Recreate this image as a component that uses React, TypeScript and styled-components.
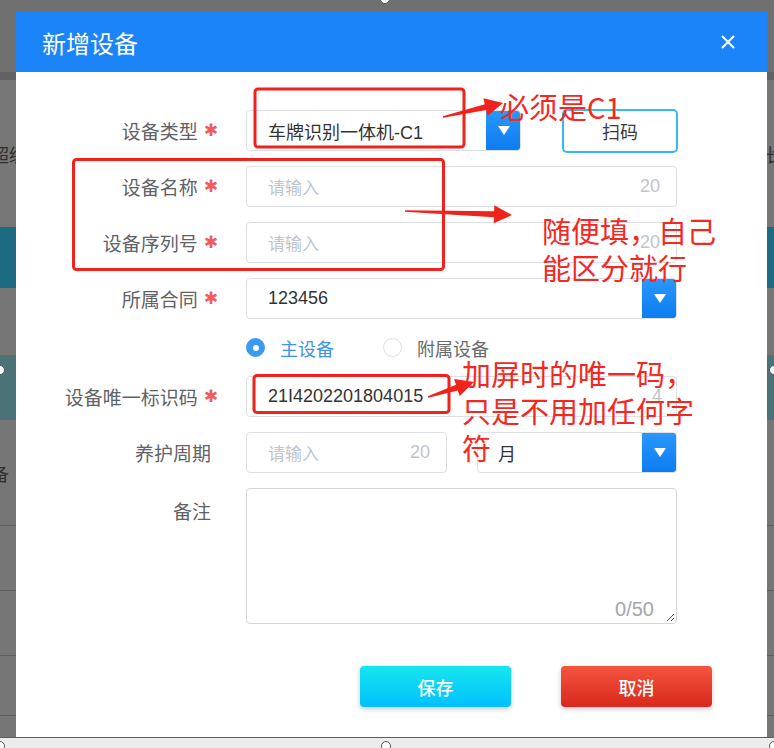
import React from "react";
import styled, { createGlobalStyle } from "styled-components";

const GlobalStyle = createGlobalStyle`
  html, body {
    margin: 0;
    padding: 0;
  }
  body {
    font-family: "Liberation Sans", "Noto Sans CJK SC", sans-serif;
  }
  * {
    box-sizing: border-box;
  }
`;

const RED = "#f0221b";

function arrowPoints(x1: number, y1: number, x2: number, y2: number) {
  const dx = x2 - x1;
  const dy = y2 - y1;
  const len = Math.sqrt(dx * dx + dy * dy);
  const ux = dx / len;
  const uy = dy / len;
  const nx = -uy;
  const ny = ux;
  const head = 18;
  const wing = 9;
  const neck = 3;
  const bx = x2 - ux * head;
  const by = y2 - uy * head;
  const pts = [
    [x1 + nx * 0.8, y1 + ny * 0.8],
    [bx + nx * neck, by + ny * neck],
    [bx + nx * wing, by + ny * wing],
    [x2, y2],
    [bx - nx * wing, by - ny * wing],
    [bx - nx * neck, by - ny * neck],
    [x1 - nx * 0.8, y1 - ny * 0.8],
  ];
  return pts.map((p) => p.map((v) => v.toFixed(1)).join(",")).join(" ");
}

const BG_ROWS = [
  { h: 72, tone: "#707070" },
  { h: 8, tone: "#626262" },
  { h: 147, tone: "#777777", left: "超级", right: "长" },
  { h: 61, tone: "#1c6b83" },
  { h: 67, tone: "#767676" },
  { h: 65, tone: "#4b7277" },
  { h: 105, tone: "#767676", left: "备" },
  { h: 65, tone: "#767676", line: true },
  { h: 65, tone: "#767676", line: true },
  { h: 60, tone: "#767676", line: true },
  { h: 22, tone: "#767676", line: true },
  { h: 11, tone: "#ececec", line: true },
];

export default function App() {
  return (
    <>
      <GlobalStyle />
      <Screen>
        <BackPage>
          {BG_ROWS.map((r, i) => (
            <BgRow key={i} $h={r.h} $tone={r.tone} $line={r.line}>
              <EdgeText $side="left">{r.left}</EdgeText>
              <EdgeText $side="right">{r.right}</EdgeText>
            </BgRow>
          ))}
        </BackPage>

        <Dialog>
          <Header>
            <Title>新增设备</Title>
            <CloseIcon width="16" height="16" viewBox="0 0 16 16">
              <path d="M2 2L14 14M14 2L2 14" stroke="#fff" strokeWidth="2" />
            </CloseIcon>
          </Header>

          <Form>
            <Label>
              设备类型<Star>✱</Star>
            </Label>
            <Inline $gap={41}>
              <Field $w={275}>
                <Value>车牌识别一体机-C1</Value>
                <DropBtn />
              </Field>
              <ScanButton>扫码</ScanButton>
            </Inline>

            <Label>
              设备名称<Star>✱</Star>
            </Label>
            <Field>
              <Placeholder>请输入</Placeholder>
              <Counter>20</Counter>
            </Field>

            <Label>
              设备序列号<Star>✱</Star>
            </Label>
            <Field>
              <Placeholder>请输入</Placeholder>
              <Counter>20</Counter>
            </Field>

            <Label>
              所属合同<Star>✱</Star>
            </Label>
            <Field>
              <Value>123456</Value>
              <DropBtn />
            </Field>

            <div />
            <RadioGroup>
              <RadioItem $checked>
                <RadioDot $checked />
                主设备
              </RadioItem>
              <RadioItem>
                <RadioDot />
                附属设备
              </RadioItem>
            </RadioGroup>

            <Label>
              设备唯一标识码<Star>✱</Star>
            </Label>
            <Field>
              <Value>21I4202201804015</Value>
              <Counter $pad={14}>4</Counter>
            </Field>

            <Label>养护周期</Label>
            <Inline $gap={30}>
              <Field $w={201}>
                <Placeholder>请输入</Placeholder>
                <Counter>20</Counter>
              </Field>
              <Field $w={200} $pad={20}>
                <Value>月</Value>
                <DropBtn />
              </Field>
            </Inline>

            <Label $top>备注</Label>
            <TextArea>
              <AreaCounter>0/50</AreaCounter>
              <Grip width="9" height="9" viewBox="0 0 9 9">
                <path d="M1 8L8 1M5 8L8 5" stroke="#555" strokeWidth="1" />
              </Grip>
            </TextArea>
          </Form>

          <Footer>
            <ActionButton $variant="save">保存</ActionButton>
            <ActionButton $variant="cancel">取消</ActionButton>
          </Footer>
        </Dialog>

        <Markup width="774" height="748" viewBox="0 0 774 748">
          <rect x="255" y="89" width="209" height="58" rx="3" fill="none" stroke={RED} strokeWidth="3" />
          <rect x="73.5" y="159.5" width="370" height="110" rx="3" fill="none" stroke={RED} strokeWidth="3" />
          <rect x="254" y="375.5" width="195" height="37" rx="3" fill="none" stroke={RED} strokeWidth="3" />
          <polygon points={arrowPoints(443, 117, 503, 103)} fill={RED} />
          <polygon points={arrowPoints(405, 211, 512, 215)} fill={RED} />
          <polygon points={arrowPoints(428, 397, 474, 382)} fill={RED} />
        </Markup>

        <Note $x={500} $y={88}>必须是C1</Note>
        <Note $x={542} $y={212}>
          随便填，自己
          <br />
          能区分就行
        </Note>
        <Note $x={462} $y={355}>
          加屏时的唯一码，
          <br />
          只是不用加任何字
          <br />符
        </Note>

        <Handle $x={385} $y={-1} />
        <Handle $x={0} $y={370} />
        <Handle $x={774} $y={370} />
        <Handle $x={0} $y={746} />
        <Handle $x={386} $y={746} />
        <Handle $x={774} $y={746} />
      </Screen>
    </>
  );
}

const Screen = styled.div`
  position: relative;
  width: 774px;
  height: 748px;
  overflow: hidden;
  background: #727272;
`;

const BackPage = styled.div`
  display: flex;
  flex-direction: column;
`;

const BgRow = styled.div<{ $h: number; $tone: string; $line?: boolean }>`
  height: ${(p) => p.$h}px;
  background: ${(p) => p.$tone};
  border-top: ${(p) => (p.$line ? "1px solid #5d5d5d" : "none")};
  display: flex;
  justify-content: space-between;
  align-items: center;
  font-size: 18px;
  color: #2e2e2e;
  font-family: "Noto Sans CJK SC", sans-serif;
`;

const EdgeText = styled.span<{ $side: "left" | "right" }>`
  margin-${(p) => p.$side}: -9px;
`;

const Dialog = styled.div`
  position: absolute;
  left: 16px;
  top: 12px;
  width: 751px;
  height: 725px;
  background: #fff;
  display: flex;
  flex-direction: column;
`;

const Header = styled.div`
  height: 60px;
  background: #1a84f8;
  display: flex;
  align-items: center;
  justify-content: space-between;
  padding: 0 31px 0 26px;
`;

const Title = styled.h2`
  margin: 0;
  font-size: 24px;
  font-weight: 400;
  color: #fff;
  font-family: "Noto Sans CJK SC", sans-serif;
`;

const CloseIcon = styled.svg`
  display: block;
`;

const Form = styled.div`
  display: grid;
  grid-template-columns: 214px 431px;
  column-gap: 16px;
  row-gap: 15px;
  padding-top: 38px;
`;

const Label = styled.div<{ $top?: boolean }>`
  display: flex;
  justify-content: flex-end;
  align-items: ${(p) => (p.$top ? "flex-start" : "center")};
  height: ${(p) => (p.$top ? "auto" : "41px")};
  padding-right: 19px;
  padding-top: ${(p) => (p.$top ? "2px" : "0")};
  font-size: 19px;
  line-height: 41px;
  color: #5f6266;
  font-family: "Noto Sans CJK SC", sans-serif;
`;

const Star = styled.span`
  color: #f25b5b;
  font-size: 17px;
  line-height: 1;
  margin-left: 6px;
  margin-right: -7px;
  font-family: "DejaVu Sans", sans-serif;
`;

const Inline = styled.div<{ $gap: number }>`
  display: flex;
  align-items: center;
  height: 41px;
  gap: ${(p) => p.$gap}px;
`;

const Field = styled.div<{ $w?: number; $pad?: number }>`
  height: 41px;
  flex-shrink: 0;
  width: ${(p) => (p.$w ? `${p.$w}px` : "100%")};
  border: 1px solid #dcdfe6;
  border-radius: 4px;
  display: flex;
  align-items: center;
  padding-left: ${(p) => p.$pad ?? 21}px;
  font-size: 18px;
  color: #333;
  overflow: hidden;
`;

const Value = styled.span`
  flex: 1;
  white-space: nowrap;
`;

const Placeholder = styled.span`
  flex: 1;
  color: #c0c4cc;
  font-family: "Noto Sans CJK SC", sans-serif;
  font-size: 17px;
`;

const Counter = styled.span<{ $pad?: number }>`
  color: #c0c4cc;
  padding-right: ${(p) => p.$pad ?? 16}px;
`;

const DropBtn = styled.div`
  width: 35px;
  align-self: stretch;
  margin: -1px -1px -1px 0;
  border-radius: 0 4px 4px 0;
  background: linear-gradient(#2a98fc, #0b7cf1);
  display: flex;
  align-items: center;
  justify-content: center;
  &::after {
    content: "";
    border-left: 6px solid transparent;
    border-right: 6px solid transparent;
    border-top: 9px solid #fff;
  }
`;

const ScanButton = styled.button`
  flex-shrink: 0;
  width: 116px;
  height: 44px;
  margin-top: 1px;
  border: 2px solid #36b8f2;
  border-radius: 5px;
  background: #fff;
  font-size: 18px;
  color: #3a3a3a;
  font-family: "Noto Sans CJK SC", sans-serif;
`;

const RadioGroup = styled.div`
  display: flex;
  align-items: center;
  gap: 49px;
  height: 27px;
`;

const RadioItem = styled.label<{ $checked?: boolean }>`
  display: flex;
  align-items: center;
  gap: 15px;
  font-size: 18px;
  color: ${(p) => (p.$checked ? "#3b94e6" : "#6a6a6a")};
  font-family: "Noto Sans CJK SC", sans-serif;
`;

const RadioDot = styled.span<{ $checked?: boolean }>`
  width: 19px;
  height: 19px;
  border-radius: 50%;
  border: 1px solid ${(p) => (p.$checked ? "#3a9af2" : "#dcdfe6")};
  background: ${(p) => (p.$checked ? "#3a9af2" : "#fff")};
  display: flex;
  align-items: center;
  justify-content: center;
  &::after {
    content: "";
    width: 6px;
    height: 6px;
    border-radius: 50%;
    background: #fff;
    display: ${(p) => (p.$checked ? "block" : "none")};
  }
`;

const TextArea = styled.div`
  position: relative;
  height: 136px;
  border: 1px solid #d4d6db;
  border-radius: 4px;
`;

const AreaCounter = styled.span`
  position: absolute;
  right: 22px;
  bottom: 2px;
  font-size: 20px;
  color: #a3a6ab;
`;

const Grip = styled.svg`
  position: absolute;
  right: 1px;
  bottom: 1px;
`;

const Footer = styled.div`
  display: flex;
  gap: 50px;
  padding-left: 344px;
  margin-top: 42px;
`;

const ActionButton = styled.button<{ $variant: "save" | "cancel" }>`
  width: 151px;
  height: 41px;
  border: none;
  border-radius: 4px;
  color: #fff;
  font-size: 18px;
  font-weight: 500;
  font-family: "Noto Sans CJK SC", sans-serif;
  background: ${(p) =>
    p.$variant === "save"
      ? "linear-gradient(#16e6ef, #02c0fd)"
      : "linear-gradient(#f5553e, #d8281d)"};
  box-shadow: 0 2px 5px rgba(0, 0, 0, 0.22);
`;

const Markup = styled.svg`
  position: absolute;
  left: 0;
  top: 0;
  pointer-events: none;
`;

const Note = styled.div<{ $x: number; $y: number }>`
  position: absolute;
  left: ${(p) => p.$x}px;
  top: ${(p) => p.$y}px;
  font-size: 29px;
  line-height: 37px;
  color: #f5281f;
  white-space: nowrap;
  font-family: "Noto Sans CJK SC", sans-serif;
  font-weight: 400;
  pointer-events: none;
`;

const Handle = styled.span<{ $x: number; $y: number }>`
  position: absolute;
  left: ${(p) => p.$x - 5}px;
  top: ${(p) => p.$y - 5}px;
  width: 10px;
  height: 10px;
  border-radius: 50%;
  background: #fff;
  border: 1px solid #555;
`;
